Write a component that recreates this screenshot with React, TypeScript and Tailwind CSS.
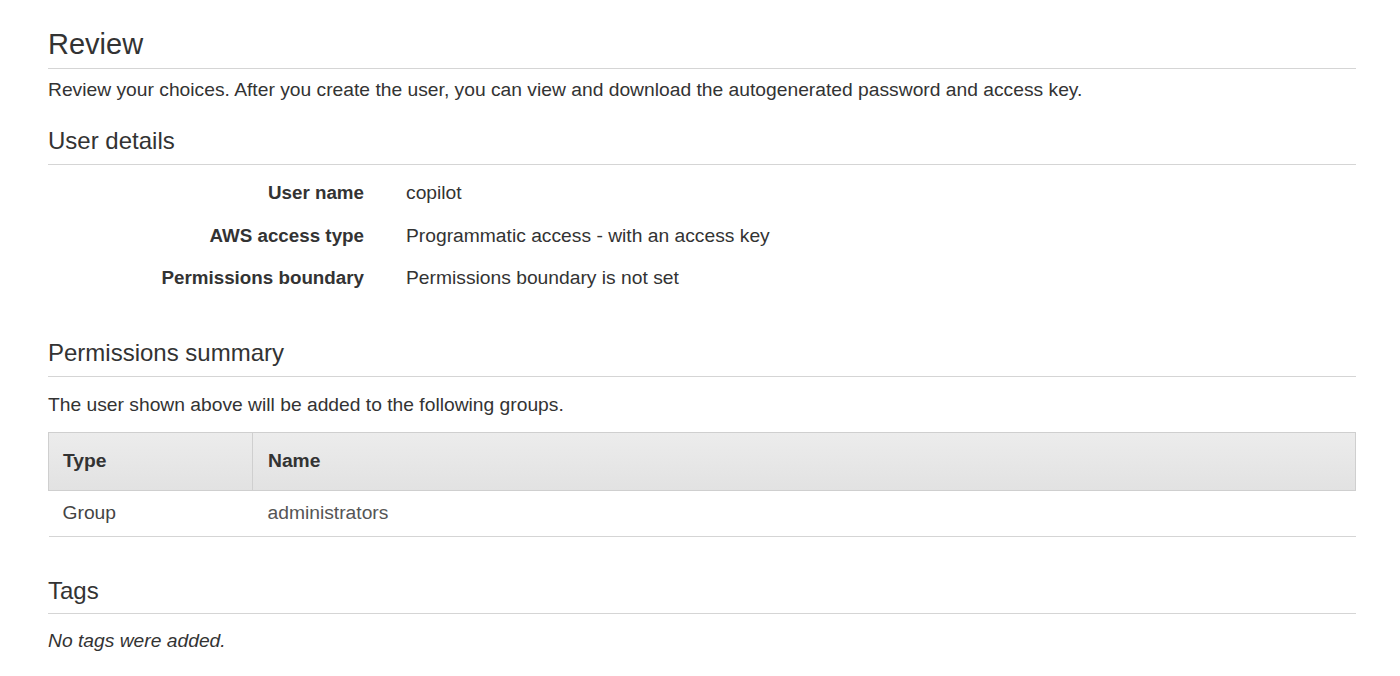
export default function App() {
  const details = [
    { label: "User name", value: "copilot" },
    { label: "AWS access type", value: "Programmatic access - with an access key" },
    { label: "Permissions boundary", value: "Permissions boundary is not set" },
  ];

  return (
    <div className="min-h-screen bg-white pl-[48px] pr-[44px] pt-[26px] text-[#333] font-['Liberation_Sans',Arial,sans-serif]">
      {/* Review */}
      <h1 className="border-b border-[#d5d5d5] pb-[6px] text-[29px] leading-[36px] text-[#333]">Review</h1>
      <p className="mt-[9px] text-[19.25px] leading-[24px] text-[#333]">
        Review your choices. After you create the user, you can view and download the autogenerated password and access key.
      </p>

      {/* User details */}
      <h2 className="mt-[24px] border-b border-[#d5d5d5] pb-[8px] text-[24px] leading-[30px] text-[#333]">User details</h2>
      <div className="mt-[16px] flex flex-col gap-[18.5px]">
        {details.map((d) => (
          <div key={d.label} className="flex text-[19.25px] leading-[24px]">
            <div className="w-[358px] shrink-0 pr-[42px] text-right text-[18.8px] font-bold text-[#333]">{d.label}</div>
            <div className="text-[#333]">{d.value}</div>
          </div>
        ))}
      </div>

      {/* Permissions summary */}
      <h2 className="mt-[48px] border-b border-[#d5d5d5] pb-[8px] text-[24px] leading-[30px] text-[#333]">Permissions summary</h2>
      <p className="mt-[16px] text-[19.25px] leading-[24px] text-[#333]">The user shown above will be added to the following groups.</p>
      <table className="mt-[15px] w-full border-collapse text-[19.25px]">
        <thead>
          <tr className="h-[58px] bg-gradient-to-b from-[#ececec] to-[#e2e2e2]">
            <th className="w-[204px] border border-[#cfcfcf] pl-[14px] text-left font-bold text-[#333]">Type</th>
            <th className="border border-[#cfcfcf] pl-[15px] text-left font-bold text-[#333]">Name</th>
          </tr>
        </thead>
        <tbody>
          <tr className="h-[46px] border-b border-[#d5d5d5]">
            <td className="pl-[14px] text-[#444]">Group</td>
            <td className="pl-[15px] text-[#555]">administrators</td>
          </tr>
        </tbody>
      </table>

      {/* Tags */}
      <h2 className="mt-[39px] border-b border-[#d5d5d5] pb-[7px] text-[24px] leading-[30px] text-[#333]">Tags</h2>
      <p className="mt-[15px] text-[19.25px] italic leading-[24px] text-[#333]">No tags were added.</p>
    </div>
  );
}
